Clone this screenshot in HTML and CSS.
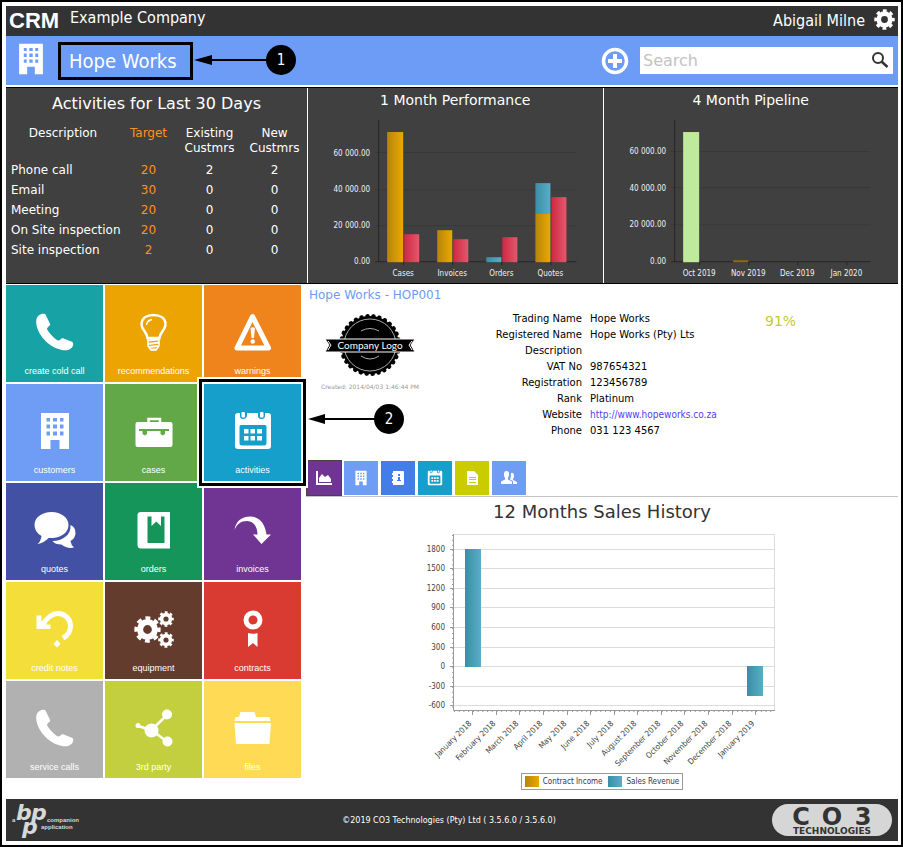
FILE: index.html
```html
<!DOCTYPE html>
<html lang="en">
<head>
    <meta charset="UTF-8">
    <meta name="viewport" content="width=device-width, initial-scale=1.0">
    <title>CRM - Hope Works</title>
    <link rel="stylesheet" href="styles.css">
</head>
<body>
    <!-- Shared icons and bar gradients -->
    <svg class="defs" width="0" height="0" aria-hidden="true">
        <defs>
            <linearGradient id="gold"><stop offset="0" stop-color="#b5850b"/><stop offset="1" stop-color="#eba800"/></linearGradient>
            <linearGradient id="pink"><stop offset="0" stop-color="#cf2842"/><stop offset="1" stop-color="#e2596d"/></linearGradient>
            <linearGradient id="blue"><stop offset="0" stop-color="#398ea6"/><stop offset="1" stop-color="#5aadc6"/></linearGradient>
        </defs>
        <symbol id="phone" viewBox="0 0 40 40">
            <path d="M4.500 3C6.500 1.500 10 1.300 10.500 2.500L15.200 12.200C15.200 14 12 15 12 17C13 20 19.500 27 23 28.500C24.500 29 26 26 28 26.200L37.500 30C39 31.500 38 34 37 35.500C34 38.700 30 38.700 26 37.700C13.500 35 1.500 22 1.200 10C1.200 6 2.500 4 4.500 3Z"/>
        </symbol>
        <symbol id="building" viewBox="0 0 40 40">
            <path fill-rule="evenodd" d="M6 2H34V38H24.500V29H15.500V38H6ZM11.500 7V10.500H15V7ZM18 7V10.500H22V7ZM25 7V10.500H28.500V7ZM11.500 13.500V17.500H15V13.500ZM18 13.500V17.500H22V13.500ZM25 13.500V17.500H28.500V13.500ZM11.500 20.500V24.500H15V20.500ZM18 20.500V24.500H22V20.500ZM25 20.500V24.500H28.500V20.500Z"/>
        </symbol>
        <symbol id="calendar" viewBox="0 0 40 40">
            <path fill-rule="evenodd" d="M5 2H7V5Q7 8 10 8T14 5V2H25V5Q25 8 28.500 8T32 5V2H35Q38 2 38 5V35Q38 38 35 38H5Q2 38 2 35V5Q2 2 5 2ZM8 14Q6.500 14 6.500 16V32Q6.500 34.500 9 34.500H31Q33.500 34.500 33.500 32V16Q33.500 14 32 14Z"/>
            <rect x="8.500" y="1" width="3.500" height="5.500" rx="1"/><rect x="27" y="1" width="3.500" height="5.500" rx="1"/>
            <path d="M11 18H15.500V22.500H11ZM17.500 18H22V22.500H17.500ZM24 18H29V22.500H24ZM11 25H15.500V29.500H11ZM17.500 25H22V29.500H17.500ZM24 25H29V29.500H24Z"/>
        </symbol>
        <symbol id="gear" viewBox="0 0 40 40">
            <g fill="none" stroke="#fff"><circle cx="20" cy="20" r="11" stroke-width="9"/><circle cx="20" cy="20" r="16.500" stroke-width="6" stroke-dasharray="7 5.960" stroke-dashoffset="3.500"/></g>
        </symbol>
    </svg>

    <header class="topbar">
        <span class="brand">CRM</span>
        <span class="company">Example Company</span>
        <span class="user">Abigail Milne</span>
        <button class="icon-btn" aria-label="Settings"><svg class="gear-icon"><use href="#gear"/></svg></button>
    </header>

    <div class="client-bar">
        <svg class="client-icon"><use href="#building"/></svg>
        <h1 class="client-name">Hope Works
            <span class="callout callout-one">
                <svg viewBox="0 0 104 30" width="104" height="30"><path d="M0 15L18 10V20Z"/><path d="M16 15H76" stroke="#000" stroke-width="2"/><circle cx="87" cy="15" r="15"/><text x="87" y="20">1</text></svg>
            </span>
        </h1>
        <button class="icon-btn add" aria-label="Add">
            <svg viewBox="0 0 28 28" width="28" height="28"><circle cx="14" cy="14" r="11.500" fill="none" stroke="#fff" stroke-width="3.500"/><path d="M14 7V21M7 14H21" stroke="#fff" stroke-width="4"/></svg>
        </button>
        <form class="search">
            <input type="search" placeholder="Search" aria-label="Search">
            <button class="icon-btn" type="button" aria-label="Run search">
                <svg viewBox="0 0 18 18" width="18" height="18"><circle cx="7" cy="6" r="5" fill="none" stroke="#333" stroke-width="2"/><path d="M10.500 9.500L16.500 15" stroke="#333" stroke-width="2.500"/></svg>
            </button>
        </form>
    </div>

    <section class="summary">
        <div class="panel">
            <h2 class="panel-title large">Activities for Last 30 Days</h2>
            <table class="activity">
                <thead>
                    <tr><th>Description</th><th class="target">Target</th><th>Existing Custmrs</th><th>New Custmrs</th></tr>
                </thead>
                <tbody>
                    <tr><td>Phone call</td><td class="target">20</td><td>2</td><td>2</td></tr>
                    <tr><td>Email</td><td class="target">30</td><td>0</td><td>0</td></tr>
                    <tr><td>Meeting</td><td class="target">20</td><td>0</td><td>0</td></tr>
                    <tr><td>On Site inspection</td><td class="target">20</td><td>0</td><td>0</td></tr>
                    <tr><td>Site inspection</td><td class="target">2</td><td>0</td><td>0</td></tr>
                </tbody>
            </table>
        </div>
        <div class="panel">
            <h2 class="panel-title">1 Month Performance</h2>
            <svg class="chart dark" viewBox="0 0 294 171">
                <path class="grid" d="M67 40.500H268M67 77.500H268M67 113.500H268"/>
                <path class="axis" d="M70.500 8V150M67 149.500H268M95.500 150V153M144.500 150V153M193.500 150V153M242.500 150V153"/>
                <g class="y-labels"><text x="62" y="44">60 000.00</text><text x="62" y="80">40 000.00</text><text x="62" y="116">20 000.00</text><text x="62" y="152">0.00</text></g>
                <g fill="url(#gold)"><rect x="79" y="20" width="16" height="130"/><rect x="129" y="118" width="15" height="32"/><rect x="227" y="101" width="15" height="49"/></g>
                <g fill="url(#blue)"><rect x="178" y="145" width="15" height="5"/><rect x="227" y="71" width="15" height="30"/></g>
                <g fill="url(#pink)"><rect x="96" y="122" width="15" height="28"/><rect x="145" y="127" width="15" height="23"/><rect x="194" y="125" width="15" height="25"/><rect x="243" y="85" width="15" height="65"/></g>
                <g class="x-labels"><text x="95" y="164">Cases</text><text x="144" y="164">Invoices</text><text x="193" y="164">Orders</text><text x="242" y="164">Quotes</text></g>
            </svg>
        </div>
        <div class="panel">
            <h2 class="panel-title">4 Month Pipeline</h2>
            <svg class="chart dark" viewBox="0 0 294 171">
                <path class="grid" d="M67 39.500H266M67 75.500H266M67 112.500H266"/>
                <path class="axis" d="M70.500 8V150M67 149.500H266M95.500 150V153M144.500 150V153M193.500 150V153M242.500 150V153"/>
                <g class="y-labels"><text x="62" y="42">60 000.00</text><text x="62" y="79">40 000.00</text><text x="62" y="115">20 000.00</text><text x="62" y="152">0.00</text></g>
                <rect x="79" y="20" width="16" height="130" fill="#bfe99b"/>
                <rect x="129" y="148" width="15" height="2" fill="#8f6a10"/>
                <g class="x-labels"><text x="95" y="164">Oct 2019</text><text x="144" y="164">Nov 2019</text><text x="193" y="164">Dec 2019</text><text x="242" y="164">Jan 2020</text></g>
            </svg>
        </div>
    </section>

    <div class="workspace">
        <nav class="tiles">
            <a href="#" class="tile teal"><svg><use href="#phone"/></svg>create cold call</a>
            <a href="#" class="tile amber">
                <svg viewBox="0 0 40 40"><g fill="none" stroke="#fff"><path stroke-width="2.500" d="M13.500 26C13 20 7.500 18 7.500 12.500C7.500 6 13 3 19.500 3S31.500 6 31.500 12.500C31.500 18 26 20 25.500 26Z"/><path stroke-width="1.500" d="M12.500 13Q13 8.500 18 7.500"/><path stroke-width="2" d="M13.500 28.500L25 27.500M14 32L25.500 30.500M15 35L24.500 34M17 37.500H22.500"/><path stroke-width="1.500" d="M14 26V34L17 38H22L25 34V26"/></g></svg>recommendations
            </a>
            <a href="#" class="tile orange">
                <svg viewBox="0 0 40 40"><path d="M19.500 4.500L35.500 36H4Z" fill="none" stroke="#fff" stroke-width="5" stroke-linejoin="round"/><path d="M17.500 16Q19.500 14.500 22 16L21 26H18.500Z"/><circle cx="19.700" cy="29.500" r="2.200"/></svg>warnings
            </a>
            <a href="#" class="tile blue"><svg><use href="#building"/></svg>customers</a>
            <a href="#" class="tile green">
                <svg viewBox="0 0 40 40"><path d="M14.500 12V8H26V12" fill="none" stroke="#fff" stroke-width="2.500"/><rect x="1.500" y="11" width="37" height="25" rx="2"/><path d="M5 19H35" stroke="#62a848" stroke-width="2"/><path d="M8.500 19H13V23L10.800 24.500L8.500 23ZM26.500 19H31V23L28.800 24.500L26.500 23Z" fill="#62a848"/></svg>cases
            </a>
            <a href="#" class="tile cyan"><svg><use href="#calendar"/></svg>activities
                <span class="callout callout-two">
                    <svg viewBox="0 0 96 30" width="96" height="30"><path d="M0 15L17 10V20Z"/><path d="M16 15H70" stroke="#000" stroke-width="2"/><circle cx="81" cy="15" r="15"/><text x="81" y="20">2</text></svg>
                </span>
            </a>
            <a href="#" class="tile indigo">
                <svg viewBox="0 0 40 40"><path d="M16.500 2C26 2 33.500 7.500 33.500 15S26 28 17 28Q14 28 13.500 28Q9 33 2.500 34Q6 31 6.500 26Q-0.500 22 -0.500 15C-0.500 7.500 7 2 16.500 2Z"/><path d="M35.500 15Q40.500 17 40.500 23Q40.500 28 35.500 31Q36 35 39 37.500Q32 39 26.500 34.500Q20 34.500 17.500 31Q25 31 30 27Q36 23 35.500 15Z"/></svg>quotes
            </a>
            <a href="#" class="tile emerald">
                <svg viewBox="0 0 40 40"><path fill-rule="evenodd" d="M7 2H36V38.500H7Q3.500 38.500 3.500 35V5Q3.500 2 7 2ZM13.500 6.500V33H30.500V6.500H27V16L22.300 11.500L17.500 16V6.500Z"/></svg>orders
            </a>
            <a href="#" class="tile purple">
                <svg viewBox="0 0 40 40"><path d="M1.500 20C3 10 10 6.500 17 6.500C27 6.500 32 14 33.500 24.500H38L28.500 34L20 24.500H24.500C24.500 16 20 11 14 11C8 11 4 14 1.500 20Z"/></svg>invoices
            </a>
            <a href="#" class="tile yellow">
                <svg viewBox="0 0 40 40"><path d="M7 17C12 8 17 4.500 23 4.500C30 4.500 35.500 10 35.500 17Q35.500 25 28 29" fill="none" stroke="#fff" stroke-width="5"/><path d="M1.500 6.500H6.500V12L11 15.500H15.500V20H1.500Z"/><path d="M22 31L25.500 35L22 38.500L18.500 35Z"/></svg>credit notes
            </a>
            <a href="#" class="tile brown">
                <svg viewBox="0 0 40 40"><use href="#gear" x="0" y="7" width="27" height="27"/><use href="#gear" x="24" y="2" width="16" height="16"/><use href="#gear" x="24" y="23" width="16" height="16"/></svg>equipment
            </a>
            <a href="#" class="tile red">
                <svg viewBox="0 0 40 40"><circle cx="20" cy="11" r="7" fill="none" stroke="#fff" stroke-width="5"/><path d="M15 24Q20 25.500 24.500 24V38L20 34L15 38Z"/></svg>contracts
            </a>
            <a href="#" class="tile gray"><svg><use href="#phone"/></svg>service calls</a>
            <a href="#" class="tile lime">
                <svg viewBox="0 0 40 40"><path d="M4 18L17.500 22L33 7M17.500 22L33.500 34" fill="none" stroke="#fff" stroke-width="2.500"/><circle cx="17.500" cy="22.500" r="7"/><circle cx="33" cy="6.500" r="5"/><circle cx="33.500" cy="33.500" r="5"/><circle cx="4" cy="17.500" r="2.500"/></svg>3rd party
            </a>
            <a href="#" class="tile sun">
                <svg viewBox="0 0 40 40"><path d="M2.500 9H6L7.500 4H21.500L23 9H36.500L37.500 13H1.500ZM1.500 15H38L36.500 36H3Z"/></svg>files
            </a>
        </nav>

        <main class="details">
            <h2 class="record-title">Hope Works - HOP001</h2>
            <div class="record">
                <figure class="record-logo">
                    <svg viewBox="0 0 90 64" width="90" height="64">
                        <circle cx="45" cy="32" r="29"/>
                        <circle cx="45" cy="32" r="29" fill="none" stroke="#000" stroke-width="4" stroke-linecap="round" stroke-dasharray="0.500 5.573"/>
                        <circle cx="45" cy="32" r="26" fill="none" stroke="#aaa" stroke-width="1"/>
                        <path d="M36 18Q45 13 54 18M36 43Q45 49 54 43" fill="none" stroke="#aaa"/>
                        <path d="M0 26H90L86 32L90 39H0L4 32Z" stroke="#fff" stroke-width="1"/>
                        <path d="M3 28L6 32L3 37M87 28L84 32L87 37" fill="none" stroke="#fff"/>
                        <text x="45" y="36">Company Logo</text>
                    </svg>
                    <figcaption>Created: 2014/04/03 1:46:44 PM</figcaption>
                </figure>
                <dl class="fields">
                    <dt>Trading Name</dt><dd>Hope Works</dd>
                    <dt>Registered Name</dt><dd>Hope Works (Pty) Lts</dd>
                    <dt>Description</dt><dd></dd>
                    <dt>VAT No</dt><dd>987654321</dd>
                    <dt>Registration</dt><dd>123456789</dd>
                    <dt>Rank</dt><dd>Platinum</dd>
                    <dt>Website</dt><dd><a href="http://www.hopeworks.co.za">http://www.hopeworks.co.za</a></dd>
                    <dt>Phone</dt><dd>031 123 4567</dd>
                </dl>
                <div class="score">91%</div>
            </div>

            <div class="tabs">
                <button class="tab purple active" aria-label="Sales history"><svg viewBox="0 0 16 16"><path d="M0 1H2V13H16V15H0Z"/><path d="M3 12V8L6 4L9 7L12 5L15 9V12Z"/></svg></button>
                <button class="tab blue" aria-label="Customer"><svg><use href="#building"/></svg></button>
                <button class="tab royal" aria-label="Contacts"><svg viewBox="0 0 16 16"><path fill-rule="evenodd" d="M3 1H13Q14 1 14 2V14Q14 15 13 15H3V13H2V11H3V9H2V7H3V5H2V3H3ZM8 4V6H10V4ZM8 7V10H7V11H11V10H10V7Z"/></svg></button>
                <button class="tab cyan" aria-label="Activities"><svg><use href="#calendar"/></svg></button>
                <button class="tab olive" aria-label="Documents"><svg viewBox="0 0 16 16"><path fill-rule="evenodd" d="M3 1H10L14 5V15H3ZM5 7V8H12V7ZM5 9V10H12V9ZM5 12V13H12V12Z"/></svg></button>
                <button class="tab blue" aria-label="Users"><svg viewBox="0 0 16 16"><path d="M5.500 1Q8.500 1 8 5Q7.500 7 7 8V9.500L11 11.500V14H0V11.500L4 9.500V8Q3 7 3 5Q2.500 1 5.500 1Z"/><path d="M10 3Q13 2 13 6Q13 8 12 9V10L16 12V14H12V11L9 9.500Q10 7 10 3Z"/></svg></button>
            </div>

            <h2 class="chart-title">12 Months Sales History</h2>
            <svg class="chart light" viewBox="0 0 592 246">
                <path class="grid" d="M148 7.500H468.500V183M148 22.500H468M148 41.500H468M148 61.500H468M148 80.500H468M148 100.500H468M148 120.500H468M148 139.500H468M148 159.500H468M148 178.500H468"/>
                <path class="axis" d="M147.500 7V183.500H469M144 22.500H148M144 41.500H148M144 61.500H148M144 80.500H148M144 100.500H148M144 120.500H148M144 139.500H148M144 159.500H148M144 178.500H148"/>
                <path class="axis" d="M146.500 8V183" stroke-dasharray="1 3.900"/>
                <path class="axis" d="M148 184.500H469" stroke-dasharray="1 3.720"/>
                <path class="axis" d="M166.500 184V188M190.500 184V188M213.500 184V188M237.500 184V188M261.500 184V188M284.500 184V188M308.500 184V188M331.500 184V188M355.500 184V188M378.500 184V188M402.500 184V188M426.500 184V188M449.500 184V188"/>
                <g class="y-labels"><text x="139" y="25">1800</text><text x="139" y="44">1500</text><text x="139" y="64">1200</text><text x="139" y="83">900</text><text x="139" y="103">600</text><text x="139" y="123">300</text><text x="139" y="142">0</text><text x="139" y="162">-300</text><text x="139" y="181">-600</text></g>
                <g fill="url(#blue)"><rect x="159" y="22" width="16" height="118"/><rect x="441" y="139" width="16" height="30"/></g>
                <g class="y-labels">
                    <text transform="translate(166 197) rotate(-45)">January 2018</text>
                    <text transform="translate(190 197) rotate(-45)">February 2018</text>
                    <text transform="translate(213 197) rotate(-45)">March 2018</text>
                    <text transform="translate(237 197) rotate(-45)">April 2018</text>
                    <text transform="translate(261 197) rotate(-45)">May 2018</text>
                    <text transform="translate(284 197) rotate(-45)">June 2018</text>
                    <text transform="translate(308 197) rotate(-45)">July 2018</text>
                    <text transform="translate(331 197) rotate(-45)">August 2018</text>
                    <text transform="translate(355 197) rotate(-45)">September 2018</text>
                    <text transform="translate(378 197) rotate(-45)">October 2018</text>
                    <text transform="translate(402 197) rotate(-45)">November 2018</text>
                    <text transform="translate(426 197) rotate(-45)">December 2018</text>
                    <text transform="translate(449 197) rotate(-45)">January 2019</text>
                </g>
            </svg>
            <ul class="legend">
                <li class="income">Contract Income</li>
                <li class="revenue">Sales Revenue</li>
            </ul>
        </main>
    </div>

    <footer class="footer">
        <svg class="bpp" viewBox="0 0 84 42" width="84" height="42">
            <text class="small" x="6" y="23">a</text>
            <text class="big" x="10" y="21">b</text><text class="big" x="25" y="21">p</text><text class="big" x="16" y="35">p</text>
            <text class="small" x="41" y="23">companion</text><text class="small" x="35" y="30">application</text>
        </svg>
        <p>©2019 CO3 Technologies (Pty) Ltd ( 3.5.6.0 / 3.5.6.0)</p>
        <svg class="co3" viewBox="0 0 120 32" width="120" height="32">
            <rect width="120" height="32" rx="16"/>
            <text class="big" x="29 60 91" y="21">CO3</text>
            <text class="wide" x="60" y="30">TECHNOLOGIES</text>
        </svg>
    </footer>
</body>
</html>
```
FILE: styles.css
```css
* { margin: 0; padding: 0; box-sizing: border-box; }
body { display: flex; flex-direction: column; min-height: 100vh; border: 2px solid #000; padding: 4px 3px 4px 4px; background: #fff; color: #000; font-family: "DejaVu Sans", Verdana, sans-serif; font-size: 10px; }
.defs { position: absolute; }
svg { flex: none; }
.icon-btn { display: flex; border: none; background: none; cursor: pointer; }

/* Top bars */
.topbar { display: flex; align-items: center; height: 30px; padding: 0 3px; background: #333; color: #fff; font-family: "DejaVu Sans Condensed", Tahoma, sans-serif; font-size: 16px; line-height: 24px; }
.brand { width: 61px; font-family: "Liberation Sans", Arial, sans-serif; font-size: 22px; font-weight: bold; }
.company { align-self: flex-start; }
.user { margin-left: auto; margin-right: 9px; }
.gear-icon { width: 21px; height: 21px; fill: #fff; margin-bottom: 4px; }
.client-bar { display: flex; align-items: center; height: 49px; padding: 0 5px 0 8px; background: #6c9cf5; }
.client-icon { width: 34px; height: 34px; fill: #fff; margin: 0 10px 4px 0; }
.client-name { position: relative; border: 3px solid #000; padding: 0 13px 0 8px; color: #fff; font-family: "DejaVu Sans Condensed", Tahoma, sans-serif; font-size: 20px; font-weight: normal; line-height: 32px; }
.add { margin-left: auto; margin-right: 11px; }
.search { display: flex; align-items: center; width: 253px; height: 27px; padding-right: 4px; background: #fff; }
.search input { flex: 1; min-width: 0; border: none; outline: none; padding-left: 3px; background: none; font-family: "DejaVu Sans", Verdana, sans-serif; font-size: 16px; }
.search input::placeholder { color: #c3c3c3; }

/* Numbered pointers */
.callout { position: absolute; }
.callout svg { display: block; }
.callout text { fill: #fff; font-family: "DejaVu Sans Condensed", Tahoma, sans-serif; font-size: 15px; text-anchor: middle; }
.callout-one { left: 100%; top: 0; margin-left: 4px; }

/* Dark summary row */
.summary { display: grid; grid-template-columns: 301px 1fr 1fr; gap: 1px; margin: 2px 0 1px; border: solid #000; border-width: 1px 0; }
.panel { background: #404040; color: #fff; }
.panel-title { font-size: 14px; font-weight: normal; line-height: 24px; text-align: center; }
.panel-title.large { font-size: 16px; line-height: 32px; }
.activity { width: 100%; border-collapse: collapse; font-size: 12px; text-align: center; table-layout: fixed; }
.activity th { height: 40px; font-weight: normal; line-height: 15px; vertical-align: top; padding-top: 6px; }
.activity td { height: 20px; }
.activity th:first-child { width: 114px; }
.activity th:nth-child(2) { width: 57px; }
.activity td:first-child { padding-left: 5px; text-align: left; white-space: nowrap; }
.activity .target { color: #ff9216; }
.chart { display: block; width: 100%; height: auto; }
.chart text { font-family: "DejaVu Sans Condensed", Tahoma, sans-serif; font-size: 8px; }
.y-labels { text-anchor: end; }
.x-labels { text-anchor: middle; }
.chart path { fill: none; }
.dark text { fill: #f0f0f0; }
.dark .grid { stroke: #383838; }
.dark .axis { stroke: #262626; }
.light text { fill: #444; }
.light .grid { stroke: #dcdcdc; }
.light .axis { stroke: #999; }

/* Tiles */
.workspace { display: flex; }
.tiles { display: grid; grid-template-columns: repeat(3, 97px); grid-auto-rows: 97px; align-content: start; gap: 2px; margin-right: 5px; }
.tile { position: relative; display: flex; flex-direction: column; align-items: center; justify-content: space-between; padding: 27px 0 5px; color: #fff; font-family: "Liberation Sans", Arial, sans-serif; font-size: 9px; line-height: 12px; text-decoration: none; }
.tile > svg { width: 40px; height: 40px; fill: #fff; overflow: visible; }
.callout-two { z-index: 1; inset: -5px; border: 3px solid #000; outline: 2px solid #fff; }
.callout-two svg { position: absolute; left: 100%; top: 22px; margin-left: 5px; fill: #000; }
.teal { background: #17a3a5; }
.amber { background: #eca403; }
.orange { background: #f0841c; }
.blue { background: #6f9cf5; }
.green { background: #62a848; }
.cyan { background: #159fca; }
.indigo { background: #4351a5; }
.emerald { background: #15955a; }
.purple { background: #703493; }
.yellow { background: #f4df3a; }
.brown { background: #643c2e; }
.red { background: #d93a31; }
.gray { background: #b1b1b1; }
.lime { background: #c3cf3e; }
.sun { background: #ffdb55; }
.royal { background: #437de9; }
.olive { background: #cbcc00; }

/* Customer record */
.details { flex: 1; min-width: 0; }
.record-title { padding-left: 3px; color: #6c9cf5; font-size: 12px; font-weight: normal; line-height: 20px; }
.record { display: flex; padding-top: 6px; }
.record-logo { width: 128px; text-align: center; }
.record-logo svg { display: block; margin: 2px auto 0; }
.record-logo text { fill: #fff; font-family: Lato, sans-serif; font-size: 10px; text-anchor: middle; }
.record-logo figcaption { color: #999; font-size: 6px; line-height: 20px; }
.fields { display: grid; grid-template-columns: 148px 167px; grid-auto-rows: 16px; column-gap: 8px; line-height: 16px; }
.fields dt { text-align: right; }
.fields a { color: #4a43f0; font-family: "DejaVu Sans Condensed", Tahoma, sans-serif; text-decoration: none; }
.score { padding-left: 8px; color: #c8c832; font-size: 14px; line-height: 20px; }
.tabs { display: flex; gap: 3px; margin-top: 22px; padding: 0 1px 1px; border-bottom: 1px solid #c4c4c4; }
.tab { display: flex; align-items: center; justify-content: center; width: 34px; height: 34px; border: none; cursor: pointer; }
.tab svg { width: 16px; height: 16px; fill: #fff; }
.tab.active { outline: 1px solid #444; }
.chart-title { color: #333; font-size: 18px; font-weight: normal; line-height: 30px; text-align: center; }
.legend { display: flex; gap: 6px; width: max-content; margin: 0 auto 9px; border: 1px solid #999; padding: 2px 3px; list-style: none; color: #335; font-family: "DejaVu Sans Condensed", Tahoma, sans-serif; font-size: 8px; line-height: 11px; }
.legend li { display: flex; gap: 4px; }
.legend li::before { content: ""; width: 14px; }
.income::before { background: linear-gradient(90deg, #b5850b, #eba800); }
.revenue::before { background: linear-gradient(90deg, #398ea6, #5aadc6); }

/* Footer */
.footer { display: grid; grid-template-columns: 120px 1fr 120px; align-items: center; height: 42px; margin-top: auto; padding-right: 6px; background: #333; color: #fff; font-size: 8px; text-align: center; }
.bpp { fill: #d8d8d8; }
.bpp .small { font-family: "Liberation Sans", Arial, sans-serif; font-size: 6px; font-weight: bold; }
.bpp .big { font-size: 22px; font-weight: bold; font-style: oblique; }
.co3 { fill: #d6d6d6; }
.co3 text { fill: #333; font-weight: bold; text-anchor: middle; }
.co3 .big { font-size: 24px; }
.co3 .wide { font-size: 9px; }
```
